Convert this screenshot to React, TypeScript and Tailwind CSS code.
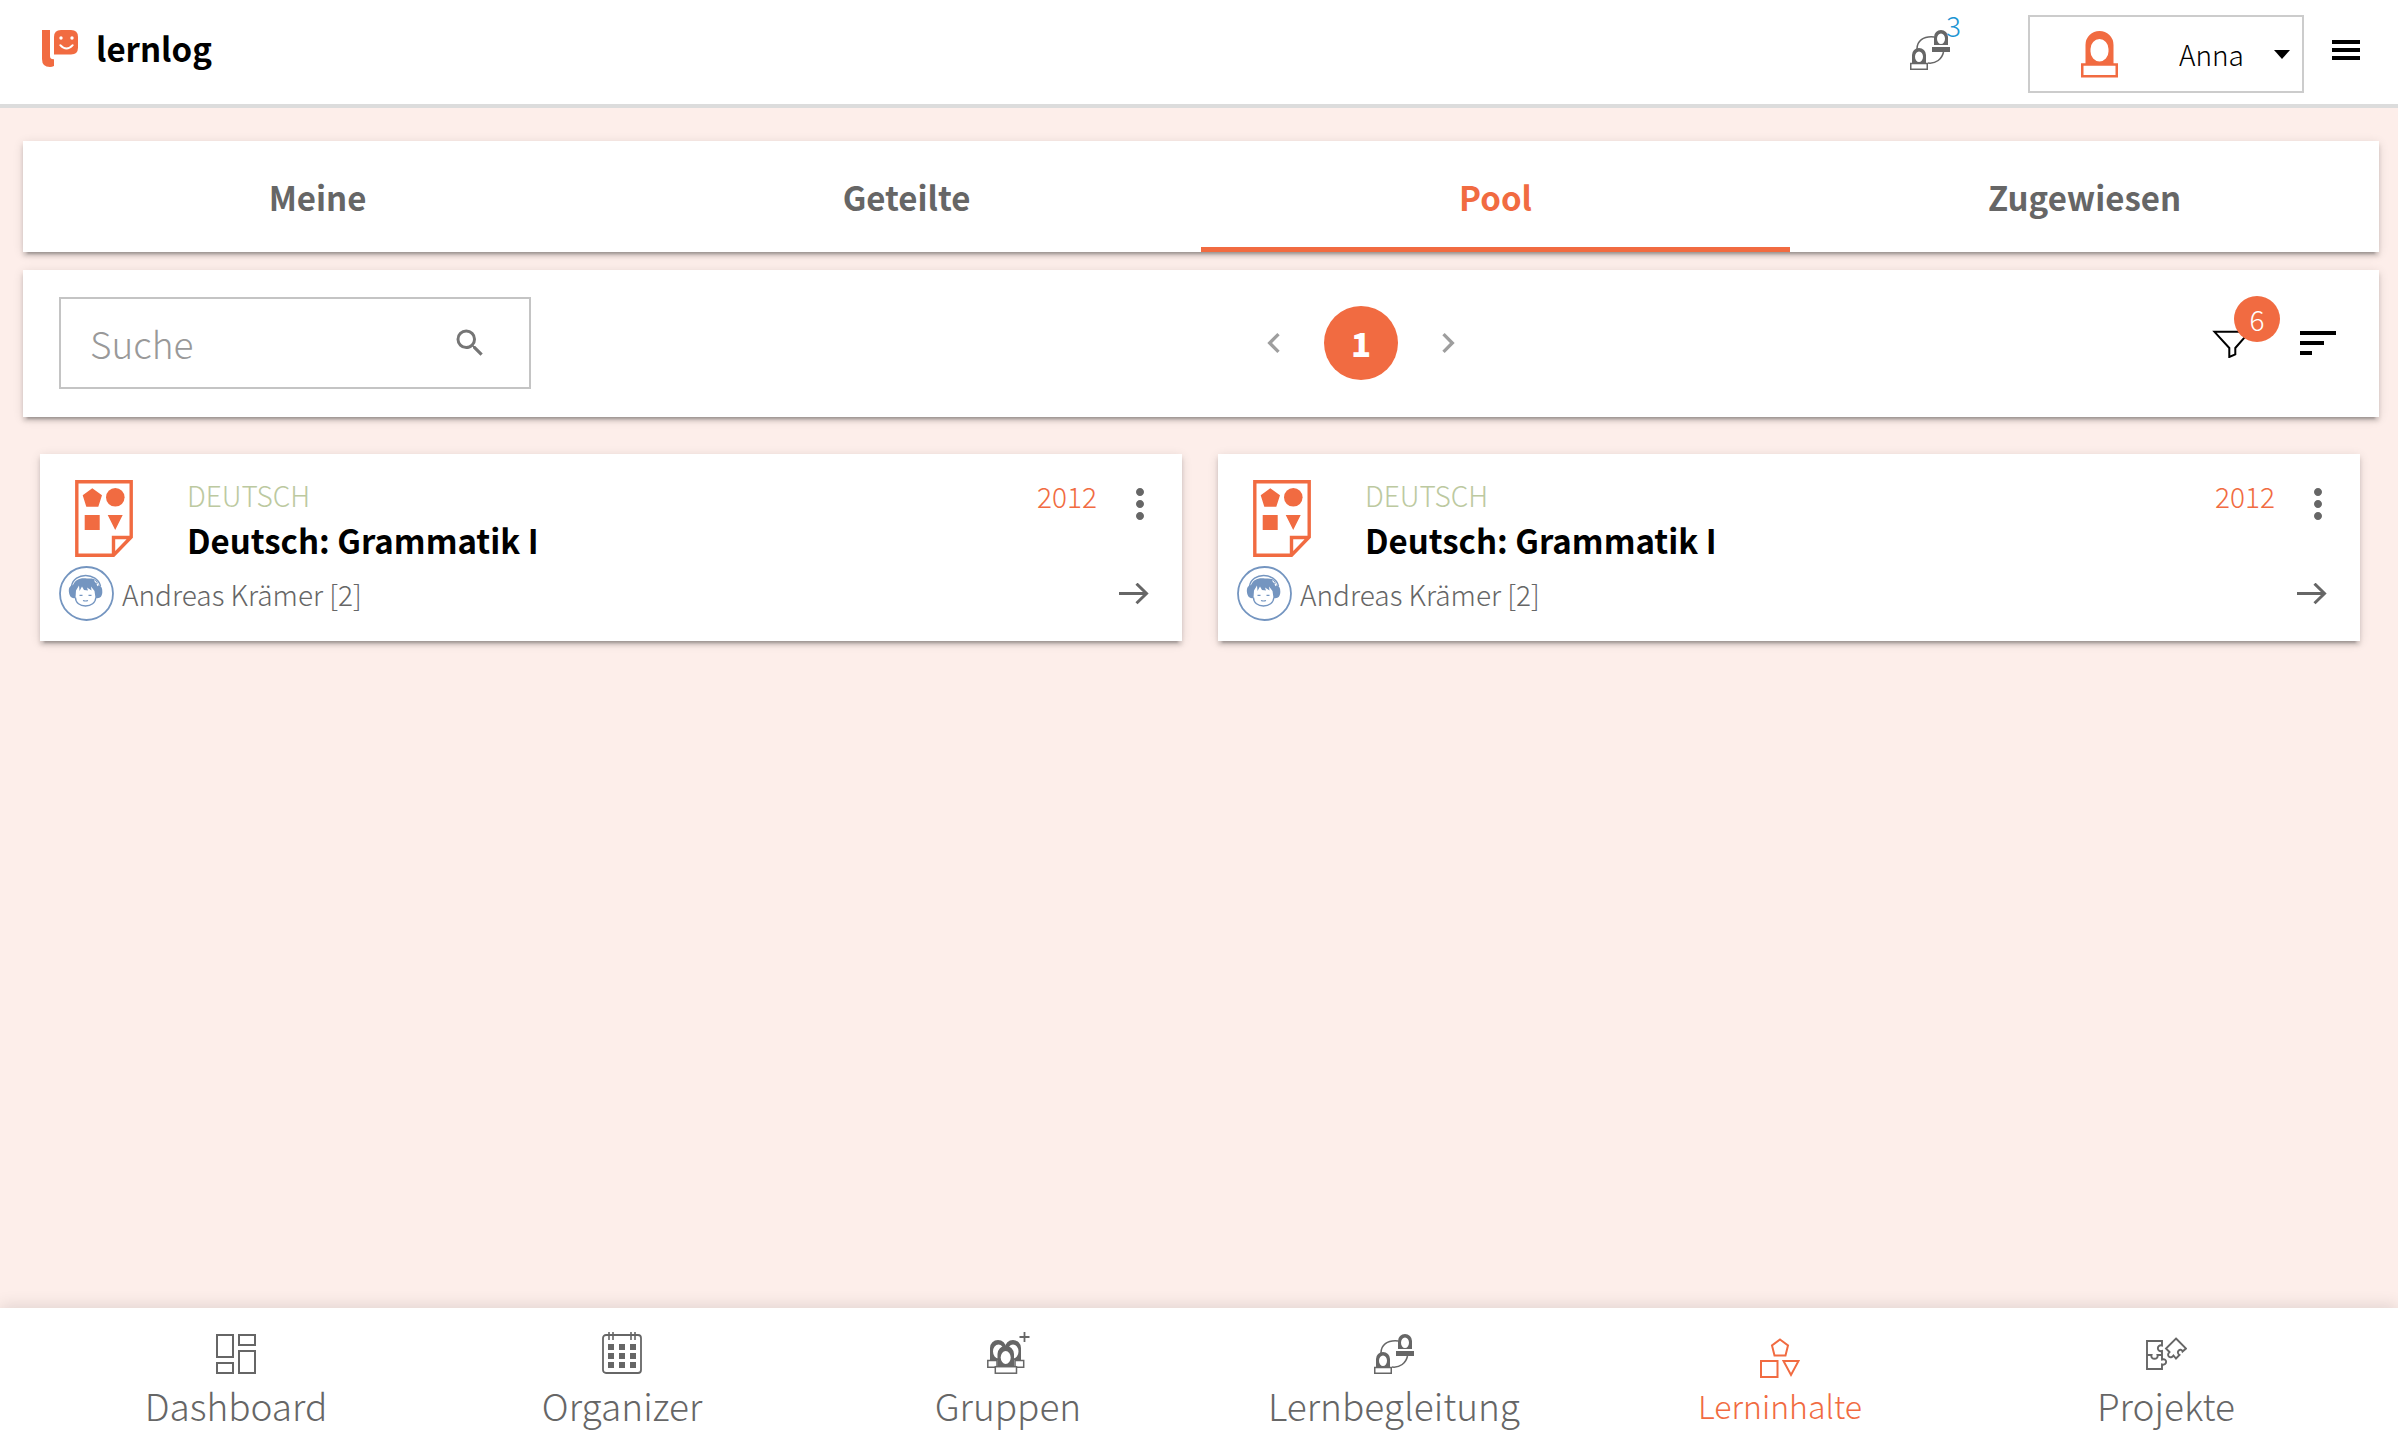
import { ReactNode } from "react";
import { MdChevronLeft, MdChevronRight, MdMoreVert, MdSearch } from "react-icons/md";

const panel =
  "bg-white shadow-[0_6px_2px_-4px_rgba(0,0,0,0.2),0_4px_4px_0_rgba(0,0,0,0.14),0_2px_10px_0_rgba(0,0,0,0.12)]";

function Logo() {
  return (
    <svg width="36" height="37" viewBox="0 0 36 37" aria-hidden="true">
      <path fill="#f16b41" d="M0 0H8V26Q8 29.5 12 29.3V36Q10 37 8 37Q0 37 0 29Z" />
      <path fill="#f16b41" d="M12 24.5V7Q12 0 19 0H29Q36 0 36 7V17.5Q36 24.5 29 24.5Z" />
      <circle cx="19" cy="8" r="1.7" fill="#fff" />
      <circle cx="30" cy="8" r="1.7" fill="#fff" />
      <path d="M18.3 15.2Q24.5 22 30.7 15.2" fill="none" stroke="#fff" strokeWidth="2" strokeLinecap="round" />
    </svg>
  );
}

function CoachingIcon() {
  return (
    <svg width="40" height="40" viewBox="0 0 40 40" aria-hidden="true">
      <g fill="none" stroke="#666" strokeWidth="1.5">
        <path d="M7 19C7 11 13 6 24 7" />
        <path d="M33.5 22C32 29 26 34 18 33" />
        <rect x="0.75" y="33.5" width="16.5" height="5.75" />
      </g>
      <path
        fill="#666"
        fillRule="evenodd"
        d="M24 15V7a7 7 0 0 1 14 0V15ZM31 3.5a4 5.2 0 1 0 0 10.4a4 5.2 0 1 0 0-10.4ZM22 17H40V22H22ZM2 33V25a7 7 0 0 1 14 0V33ZM9 21.5a4 5.2 0 1 0 0 10.4a4 5.2 0 1 0 0-10.4Z"
      />
    </svg>
  );
}

function UserIcon() {
  return (
    <svg width="37" height="47" viewBox="0 0 37 47" className="shrink-0" aria-hidden="true">
      <path
        fill="#f16b41"
        fillRule="evenodd"
        d="M4.5 33V14a14 14 0 0 1 28 0V33ZM18.5 8a9 10 0 0 0-9 10V20.5a9 10 0 0 0 18 0V18a9 10 0 0 0-9-10Z"
      />
      <rect x="1.25" y="33.5" width="34.5" height="11.75" fill="#fff" stroke="#f16b41" strokeWidth="2.5" />
    </svg>
  );
}

function DocumentIcon() {
  return (
    <svg width="58" height="77" viewBox="0 0 58 77" className="shrink-0" aria-hidden="true">
      <path
        d="M1.8 1.8H56.2V57L38.5 75.2H1.8ZM38.5 75V57.5H56"
        fill="none"
        stroke="#f16b41"
        strokeWidth="3.4"
      />
      <path
        fill="#f16b41"
        d="M17.3 8.3L27 15.3L23.3 26.7H11.3L7.7 15.3ZM9.7 35H24.7V50H9.7ZM32.7 35H47.7L40.2 50Z"
      />
      <circle cx="40.3" cy="17.3" r="9.3" fill="#f16b41" />
    </svg>
  );
}

function Avatar() {
  return (
    <svg width="55" height="55" viewBox="0 0 55 55" className="shrink-0" aria-hidden="true">
      <circle cx="27.5" cy="27.5" r="26.5" fill="#fff" stroke="#7495c0" strokeWidth="1.8" />
      <path d="M12.5 20C15 6 38 6 41.5 20" fill="none" stroke="#7495c0" strokeWidth="1.4" />
      <path
        fill="#7495c0"
        d="M14 19C10 20 9.5 23 10 26.5C10.5 30.5 13 33 16.5 32L17 24.5L20 19.5L20.5 25L23 20.5L25 24L29 24.5L28 21.5L32.5 24.5L32 20.5L35.5 25L36.5 32C41 33 43 30.5 43.3 26.5C43.5 22 42.5 20 39.5 19L38 15C35 12 31.5 12.3 28 12.5C21 11.5 16.5 13.5 14 19Z"
      />
      <path
        d="M16.5 31.5C16.5 37 21 40 26.5 40S36.5 37 36.8 31.5"
        fill="none"
        stroke="#7495c0"
        strokeWidth="1.3"
      />
      <path
        d="M20.5 29.3H23.5M29.5 29.3H32.5M24 34.5Q26.5 35.5 29 34.5"
        fill="none"
        stroke="#7495c0"
        strokeWidth="1.2"
      />
      <path d="M35.5 14.5L37.5 17M38 17.5L39 20" stroke="#fff" strokeWidth="1.2" />
    </svg>
  );
}

function FilterIcon() {
  return (
    <svg width="40" height="30" viewBox="0 0 40 30" aria-hidden="true">
      <path d="M2.5 3.8H37.5L23.3 20V26.3L17.3 29V20Z" fill="none" stroke="#000" strokeWidth="2" />
    </svg>
  );
}

function DashboardIcon() {
  return (
    <svg width="40" height="40" viewBox="0 0 40 40" fill="none" stroke="#666" strokeWidth="2" aria-hidden="true">
      <path d="M1 1H17V23H1ZM1 29H17V39H1ZM23 1H39V11H23ZM23 17H39V39H23Z" />
    </svg>
  );
}

function CalendarIcon() {
  return (
    <svg width="40" height="44" viewBox="0 -2 40 44" className="-my-0.5" aria-hidden="true">
      <rect x="1" y="1" width="38" height="38" rx="3" fill="none" stroke="#666" strokeWidth="1.8" />
      <path d="M7 -2V6M11 -2V6M29 -2V6M33 -2V6" stroke="#666" strokeWidth="1.6" />
      <path
        fill="#666"
        d="M6 10h6v6h-6zM17 10h6v6h-6zM28 10h6v6h-6zM6 19h6v6h-6zM17 19h6v6h-6zM28 19h6v6h-6zM6 28h6v6h-6zM17 28h6v6h-6zM28 28h6v6h-6z"
      />
    </svg>
  );
}

function GroupIcon() {
  return (
    <svg width="40" height="44" viewBox="1 -2 40 44" className="-my-0.5 overflow-visible" aria-hidden="true">
      <path
        fill="#666"
        fillRule="evenodd"
        d="M3 26V14a8 8 0 0 1 16 0V26ZM11.5 10.5a5.5 7 0 1 0 0 14a5.5 7 0 1 0 0-14Z"
      />
      <path
        fill="#666"
        fillRule="evenodd"
        d="M18 26V14a8 8 0 0 1 16 0V26ZM26 10.5a5.5 7 0 1 0 0 14a5.5 7 0 1 0 0-14Z"
      />
      <path d="M0.8 26.5H10V33.3H0.8ZM28 26.5H36.7V33.3H28Z" fill="#fff" stroke="#666" strokeWidth="1.5" />
      <path fill="#666" d="M10.5 32V20a8.25 8.25 0 0 1 16.5 0V32Z" />
      <ellipse cx="18.7" cy="23.5" rx="5" ry="6.5" fill="#fff" />
      <rect x="8.3" y="32.7" width="21.2" height="6.5" fill="#fff" stroke="#666" strokeWidth="1.5" />
      <path d="M37.5 -2V8M32.5 3H42.5" stroke="#666" strokeWidth="1.8" />
    </svg>
  );
}

function ShapesIcon() {
  return (
    <svg
      width="40"
      height="44"
      viewBox="0 0 40 44"
      className="-mb-1"
      fill="none"
      stroke="#f16b41"
      strokeWidth="2"
      aria-hidden="true"
    >
      <path d="M20 5.5L28 11.5L25.5 21.5H14.5L12 11.5ZM1 27H17.5V43H1ZM23.5 27H38.5L31 41Z" />
    </svg>
  );
}

function PuzzleIcon() {
  return (
    <svg width="42" height="40" viewBox="0 0 42 40" fill="none" stroke="#666" strokeWidth="1.9" aria-hidden="true">
      <path d="M2 7H17V11.5C11.5 10 11.5 18.5 17 17V25.5C22.5 23.5 22.5 32 17 30.5V35H2Z" />
      <path d="M2 21H6.5C5 26 14 26 12.5 21H17" />
      <path d="M31 4.5L41 14.5L37.5 17.5C36 13 30 18 34.5 21L31 24.5L28.5 21.5C26 25.5 20.5 22 24.5 18L21 14.5Z" />
    </svg>
  );
}

const tabs = ["Meine", "Geteilte", "Pool", "Zugewiesen"];

const navItems: { label: string; icon: ReactNode; active?: boolean }[] = [
  { label: "Dashboard", icon: <DashboardIcon /> },
  { label: "Organizer", icon: <CalendarIcon /> },
  { label: "Gruppen", icon: <GroupIcon /> },
  { label: "Lernbegleitung", icon: <CoachingIcon /> },
  { label: "Lerninhalte", icon: <ShapesIcon />, active: true },
  { label: "Projekte", icon: <PuzzleIcon /> },
];

function Header() {
  return (
    <header className="flex h-[108px] items-start border-b-4 border-[#dcdcdc] bg-white pt-[15px] pr-[38px] pl-[42px]">
      <a href="#start" className="flex h-[66px] items-center gap-[18px]">
        <Logo />
        <span className="text-[33px] leading-10 font-bold text-black">lernlog</span>
      </a>
      <div className="ml-auto flex items-start">
        <button type="button" aria-label="Lernbegleitung, 3 neue" className="relative flex h-[70px] items-center">
          <CoachingIcon />
          <span className="absolute -top-1.5 left-9 text-[28px] leading-8 text-[#1b95d3]">3</span>
        </button>
        <div className="ml-[78px] flex h-[78px] w-[276px] items-center border-2 border-[#ccc] pr-3 pl-[51px]">
          <UserIcon />
          <select
            aria-label="Benutzer"
            defaultValue="Anna"
            className="ml-[61px] min-w-0 flex-1 appearance-none bg-transparent text-[28px] leading-10 text-black outline-none"
          >
            <option>Anna</option>
          </select>
          <svg width="16" height="9" viewBox="0 0 16 9" className="pointer-events-none shrink-0" aria-hidden="true">
            <path d="M0 0H16L8 9Z" />
          </svg>
        </div>
        <button type="button" aria-label="Menü" className="ml-7 flex h-[70px] w-7 flex-col justify-center gap-1">
          <span className="h-1 bg-black" />
          <span className="h-1 bg-black" />
          <span className="h-1 bg-black" />
        </button>
      </div>
    </header>
  );
}

function Toolbar() {
  return (
    <section className={`mt-[18px] flex items-center justify-between pt-[27px] pr-[43px] pb-7 pl-9 ${panel}`}>
      <div className="flex h-[92px] w-[472px] items-center border-2 border-[#c4c4c4] pr-[41px] pl-[29px]">
        <input
          type="text"
          aria-label="Suche"
          placeholder="Suche"
          className="min-w-0 flex-1 bg-transparent text-[37px] leading-[48px] text-[#666] outline-none placeholder:text-[#999]"
        />
        <button type="button" aria-label="Suchen" className="text-[#757575]">
          <MdSearch size={36} />
        </button>
      </div>
      <nav aria-label="Seiten" className="flex items-center gap-[30px] text-[#9e9e9e]">
        <button type="button" aria-label="Vorherige Seite">
          <MdChevronLeft size={40} />
        </button>
        <button
          type="button"
          aria-current="page"
          className="flex size-[74px] items-center justify-center rounded-full bg-[#f16b41] text-[33px] leading-10 font-black text-white"
        >
          1
        </button>
        <button type="button" aria-label="Nächste Seite">
          <MdChevronRight size={40} />
        </button>
      </nav>
      <div className="flex items-center gap-12 pl-[21px]">
        <button type="button" aria-label="Filter, 6 aktiv" className="relative">
          <FilterIcon />
          <span className="absolute -top-8 left-[22px] flex size-[46px] items-center justify-center rounded-full bg-[#f16b41] text-[28px] leading-10 text-white">
            6
          </span>
        </button>
        <button type="button" aria-label="Sortieren" className="flex w-9 flex-col gap-1.5">
          <span className="h-1 w-9 bg-black" />
          <span className="h-1 w-6 bg-black" />
          <span className="h-1 w-3 bg-black" />
        </button>
      </div>
    </section>
  );
}

function ContentCard() {
  return (
    <article className={`pt-[26px] pr-[18px] pb-5 pl-[19px] ${panel}`}>
      <div className="flex h-[86px] items-start pl-4">
        <DocumentIcon />
        <div className="ml-[54px] flex-1">
          <p className="text-[28px] leading-[30px] text-[#bcc9a0]">DEUTSCH</p>
          <h2 className="mt-2.5 text-[33px] leading-10 font-bold text-black">Deutsch: Grammatik I</h2>
        </div>
        <span className="text-[28px] leading-8 text-[#f16b41]">2012</span>
        <button type="button" aria-label="Mehr" className="ml-[19px] text-[#666]">
          <MdMoreVert size={48} />
        </button>
      </div>
      <div className="flex items-center gap-2">
        <Avatar />
        <span className="text-[28px] leading-10 text-[#666]">Andreas Krämer [2]</span>
        <button type="button" aria-label="Öffnen" className="mr-[15px] ml-auto">
          <svg width="30" height="22" viewBox="0 0 30 22" fill="none" stroke="#666" strokeWidth="3" aria-hidden="true">
            <path d="M0 10.5H28M17.5 0.7L27.5 10.5L17.5 20.3" />
          </svg>
        </button>
      </div>
    </article>
  );
}

export default function App() {
  return (
    <div className="flex min-h-screen flex-col bg-[#fdeeea] font-['Noto_Sans_CJK_SC','Noto_Sans',sans-serif] font-light">
      <Header />
      <main className="flex-1 pt-[33px] pr-[19px] pl-[23px]">
        <div role="tablist" className={`grid grid-cols-4 ${panel}`}>
          {tabs.map((tab) => (
            <button
              key={tab}
              type="button"
              role="tab"
              aria-selected={tab === "Pool"}
              className="relative h-[111px] text-[33px] leading-10 font-bold text-[#666] aria-selected:text-[#f16b41]"
            >
              {tab}
              {tab === "Pool" && <span className="absolute inset-x-0 bottom-0 h-[5px] bg-[#f16b41]" />}
            </button>
          ))}
        </div>
        <Toolbar />
        <section aria-label="Lerninhalte" className="mt-[37px] grid grid-cols-2 gap-9 pr-[19px] pl-[17px]">
          <ContentCard />
          <ContentCard />
        </section>
      </main>
      <nav
        aria-label="Hauptnavigation"
        className="grid grid-cols-6 bg-white pr-[39px] pl-[43px] shadow-[0_-2px_16px_rgba(0,0,0,0.12)]"
      >
        {navItems.map(({ label, icon, active }) => (
          <a
            key={label}
            href={`#${label.toLowerCase()}`}
            className="flex flex-col items-center pt-[26px] pb-[17px] text-[#666] aria-[current=page]:text-[#f16b41]"
            aria-current={active ? "page" : undefined}
          >
            {icon}
            <span className={active ? "mt-[9px] text-[32px] leading-[44px]" : "mt-[9px] text-[37px] leading-[44px]"}>
              {label}
            </span>
          </a>
        ))}
      </nav>
    </div>
  );
}
